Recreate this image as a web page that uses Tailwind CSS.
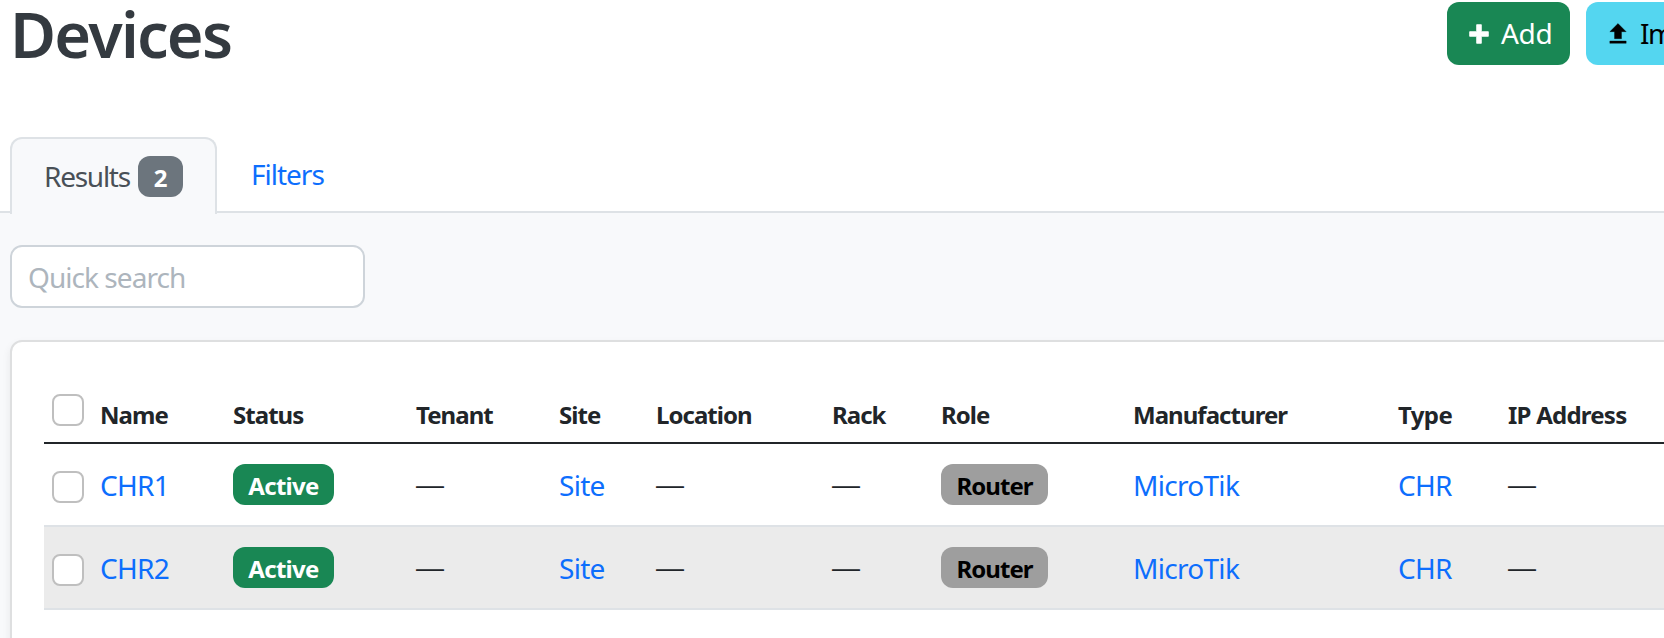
<!DOCTYPE html>
<html lang="en">
<head>
<meta charset="utf-8">
<title>Devices</title>
<script src="https://cdn.jsdelivr.net/npm/@tailwindcss/browser@4"></script>
</head>
<body class="h-[638px] overflow-hidden bg-white font-['Noto_Sans',sans-serif] text-[28px] leading-[42px] text-[#212529]">
<div class="flex h-[638px] w-[1664px] flex-col overflow-hidden">
  <header class="flex h-[137px] shrink-0 items-start justify-between pt-[2px] pl-[10px]">
    <h1 class="-mt-[4px] text-[63px] leading-[72px] font-[560] tracking-[-0.028em] text-[#343a40]"><span>Devices</span></h1>
    <div class="flex w-[217px] shrink-0 gap-4">
      <button class="flex h-[63px] w-[123px] shrink-0 items-center rounded-xl bg-[#198754] pl-[18px] text-white">
        <svg class="size-7 shrink-0" viewBox="0 0 24 24" fill="currentColor" stroke="currentColor" stroke-width="0.7"><path d="M20 14H14V20H10V14H4V10H10V4H14V10H20V14Z"/></svg>
        <span class="-mt-[2px] ml-2 tracking-[-0.01em]">Add</span>
      </button>
      <button class="flex h-[63px] w-[163px] shrink-0 items-center rounded-xl bg-[#54d6f0] pl-[18px] text-black">
        <svg class="size-7 shrink-0" viewBox="0 0 24 24" fill="currentColor" stroke="currentColor" stroke-width="0.3"><path d="M9,16V10H5L12,3L19,10H15V16H9M5,20V18H19V20H5Z"/></svg>
        <span class="-mt-[2px] ml-2 tracking-[-0.05em]">Import</span>
      </button>
    </div>
  </header>
  <nav class="flex h-[76px] shrink-0 border-b-2 border-[#dee2e6] pl-[10px]">
    <a class="z-10 flex h-[77px] w-[207px] shrink-0 items-start rounded-t-xl border-2 border-b-0 border-[#dee2e6] bg-[#f8f9fb] pt-[17px] pl-[32px] text-[#495057]">
      <span class="-mt-px w-[94px] tracking-[-0.045em]"><span>Results</span></span>
      <span class="flex h-[41px] w-[45px] items-center justify-center rounded-xl bg-[#6c757d] pt-[3px] text-[24px] font-bold text-white">2</span>
    </a>
    <a class="pt-[16px] pl-[34px] tracking-[-0.036em] text-[#0d6efd]"><span>Filters</span></a>
  </nav>
  <main class="flex-1 bg-[#f8f9fb] pt-8 pl-[10px]">
    <div class="flex h-[63px] w-[355px] items-center rounded-xl border-2 border-[#ced4da] bg-white pl-4 tracking-[-0.034em] text-[#adb5bd]"><span>Quick search</span></div>
    <section class="mt-8 h-[400px] w-[1700px] rounded-xl border-2 border-[#dedfe0] bg-white pt-[40px] pl-[32px] shadow-[0_4px_8px_rgba(0,0,0,0.075)]">
      <div class="grid h-[62px] grid-cols-[56px_133px_183px_143px_97px_176px_109px_192px_265px_110px_200px] border-b-2 border-[#212529] pt-[12px] text-[24px] leading-[42px] font-bold tracking-[-0.04em]">
        <i class="ml-2 size-8 rounded-lg border-2 border-[#bfbfbf] bg-white"></i>
        <span>Name</span><span>Status</span><span>Tenant</span><span>Site</span><span>Location</span><span>Rack</span><span>Role</span><span>Manufacturer</span><span class="tracking-[-0.025em]">Type</span><span class="tracking-[-0.032em]">IP Address</span>
      </div>
      <div class="grid h-[83px] grid-cols-[56px_133px_183px_143px_97px_176px_109px_192px_265px_110px_200px] border-b-2 border-[#dee2e6] pt-[20px] tracking-[-0.025em] text-[#0d6efd]">
        <i class="mt-[7px] ml-2 size-8 rounded-lg border-2 border-[#bfbfbf] bg-white"></i>
        <span>CHR1</span>
        <span class="flex h-[41px] w-[101px] items-center justify-center rounded-xl bg-[#198754] pt-[2px] text-[24px] font-bold tracking-[-0.03em] text-white">Active</span>
        <span class="font-['Liberation_Sans',sans-serif] text-[#212529]">—</span>
        <span>Site</span>
        <span class="font-['Liberation_Sans',sans-serif] text-[#212529]">—</span>
        <span class="font-['Liberation_Sans',sans-serif] text-[#212529]">—</span>
        <span class="flex h-[41px] w-[107px] items-center justify-center rounded-xl bg-[#9e9e9e] pt-[2px] text-[24px] font-bold tracking-[-0.04em] text-black">Router</span>
        <span>MicroTik</span><span>CHR</span>
        <span class="font-['Liberation_Sans',sans-serif] text-[#212529]">—</span>
      </div>
      <div class="grid h-[83px] w-[1664px] grid-cols-[56px_133px_183px_143px_97px_176px_109px_192px_265px_110px_200px] border-b-2 border-[#dee2e6] bg-[#ebebeb] pt-[20px] tracking-[-0.025em] text-[#0d6efd]">
        <i class="mt-[7px] ml-2 size-8 rounded-lg border-2 border-[#bfbfbf] bg-white"></i>
        <span>CHR2</span>
        <span class="flex h-[41px] w-[101px] items-center justify-center rounded-xl bg-[#198754] pt-[2px] text-[24px] font-bold tracking-[-0.03em] text-white">Active</span>
        <span class="font-['Liberation_Sans',sans-serif] text-[#212529]">—</span>
        <span>Site</span>
        <span class="font-['Liberation_Sans',sans-serif] text-[#212529]">—</span>
        <span class="font-['Liberation_Sans',sans-serif] text-[#212529]">—</span>
        <span class="flex h-[41px] w-[107px] items-center justify-center rounded-xl bg-[#9e9e9e] pt-[2px] text-[24px] font-bold tracking-[-0.04em] text-black">Router</span>
        <span>MicroTik</span><span>CHR</span>
        <span class="font-['Liberation_Sans',sans-serif] text-[#212529]">—</span>
      </div>
    </section>
  </main>
</div>
</body>
</html>
